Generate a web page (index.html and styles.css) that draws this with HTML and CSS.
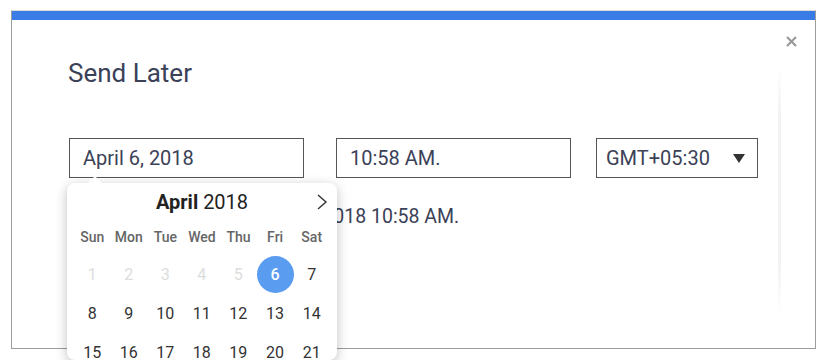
FILE: index.html
```html
<!DOCTYPE html>
<html lang="en">
<head>
  <meta charset="UTF-8">
  <title>Send Later</title>
  <link rel="stylesheet" href="styles.css">
</head>
<body>

  <div id="dialog">
    <div class="topBar"></div>

    <div class="dialogBody">
      <div class="content">
        <h2 class="title">Send Later</h2>

        <div class="fields">
          <div class="dateWrap">
            <div class="field dateField">April 6, 2018</div>

            <div id="datePicker">
              <div class="pickerHead">
                <span><b>April</b> 2018</span>
                <svg class="nextArrow" width="12" height="18" viewBox="0 0 12 18">
                  <polyline points="2,2 10,9 2,16" fill="none" stroke="#333" stroke-width="1.4"/>
                </svg>
              </div>
              <div class="weekDays">
                <span>Sun</span><span>Mon</span><span>Tue</span><span>Wed</span><span>Thu</span><span>Fri</span><span>Sat</span>
              </div>
              <div class="days">
                <span class="past">1</span><span class="past">2</span><span class="past">3</span><span class="past">4</span><span class="past">5</span><span class="selected"><i>6</i></span><span>7</span>
                <span>8</span><span>9</span><span>10</span><span>11</span><span>12</span><span>13</span><span>14</span>
                <span>15</span><span>16</span><span>17</span><span>18</span><span>19</span><span>20</span><span>21</span>
              </div>
            </div>
          </div>

          <div class="field timeField">10:58 AM.</div>

          <div class="field zoneField">
            <span>GMT+05:30</span>
            <span class="caret"></span>
          </div>
        </div>

        <p class="note">Email will be sent on April 6, 2018 10:58 AM.</p>
      </div>

      <div class="scrollTrack"></div>
      <div class="closeBtn">
        <svg width="11" height="11" viewBox="0 0 11 11">
          <path d="M1 1 L10 10 M10 1 L1 10" stroke="#9a9a9a" stroke-width="2.2"/>
        </svg>
      </div>
    </div>
  </div>

</body>
</html>
```

FILE: styles.css
```css
html, body {
  height: 360px;
  overflow: hidden;
}

body {
  margin: 0;
  background-color: #fff;
  font-family: 'Roboto', 'Liberation Sans', sans-serif;
}

#dialog {
  margin: 10px 0 0 11px;
  width: 805px;
  height: 339px;
  box-sizing: border-box;
  border: 1px solid #9c9c9c;
  border-top-color: #dcdcdc;
  background-color: #fff;
}

.topBar {
  height: 9px;
  background-color: #3a7ce5; /* brand blue */
}

.dialogBody {
  display: flex;
}

.content {
  flex: 1;
  padding-left: 57px;
}

.title {
  margin: 38px 0 0 -1px;
  font-size: 26px;
  line-height: 30px;
  font-weight: 400;
  color: #3b4157;
}

.fields {
  display: flex;
  margin-top: 50px;
}

.field {
  height: 40px;
  box-sizing: border-box;
  border: 1px solid #555;
  display: flex;
  align-items: center;
  font-size: 20px;
  color: #3b4157;
}

.dateWrap {
  position: relative;
}

.dateField {
  width: 235px;
  padding: 0 13px;
}

.timeField {
  width: 235px;
  margin-left: 32px;
  padding: 0 13px;
}

.zoneField {
  width: 162px;
  margin-left: 25px;
  padding: 0 12px 0 9px;
  justify-content: space-between;
}

.caret {
  width: 0;
  height: 0;
  border-left: 6px solid transparent;
  border-right: 6px solid transparent;
  border-top: 9px solid #333;
}

.note {
  margin: 27px 0 0 7px;
  font-size: 19.5px;
  line-height: 24px;
  color: #3b4157;
}

.scrollTrack {
  width: 3px;
  margin: 46px 0 0;
  height: 248px;
  background: linear-gradient(to bottom, rgba(0, 0, 0, 0), rgba(0, 0, 0, 0.05) 20%, rgba(0, 0, 0, 0.05) 80%, rgba(0, 0, 0, 0));
}

.closeBtn {
  width: 29px;
  padding: 12px 0 0 5px;
}

/* calendar popup */
#datePicker {
  position: absolute;
  top: 45px;
  left: -2px;
  width: 270px;
  height: 177px;
  box-sizing: border-box;
  padding: 0 7px;
  background-color: #fff;
  border-radius: 8px;
  box-shadow: 0 3px 12px rgba(0, 0, 0, 0.25);
  z-index: 2;
}

#datePicker::before {
  content: '';
  position: absolute;
  top: -5px;
  left: 23px;
  width: 10px;
  height: 10px;
  background-color: #fff;
  transform: rotate(45deg);
}

.pickerHead {
  position: relative;
  height: 38px;
  display: flex;
  align-items: center;
  justify-content: center;
  font-size: 20px;
  color: #222;
}

.nextArrow {
  position: absolute;
  right: 2px;
  top: 10px;
}

.weekDays, .days {
  display: grid;
  grid-template-columns: repeat(7, 1fr);
  text-align: center;
}

.weekDays {
  height: 32px;
  align-items: center;
  margin-bottom: 2px;
  font-size: 14px;
  font-weight: 500;
  color: #666;
}

.days {
  grid-auto-rows: 38px;
  row-gap: 1px;
  align-items: center;
  font-size: 16px;
  color: #333;
}

.days .past {
  color: #ddd;
}

.days .selected i {
  font-style: normal;
  font-weight: 500;
  display: inline-flex;
  align-items: center;
  justify-content: center;
  width: 37px;
  height: 37px;
  border-radius: 50%;
  background-color: #5a9cf0;
  color: #fff;
}
```
